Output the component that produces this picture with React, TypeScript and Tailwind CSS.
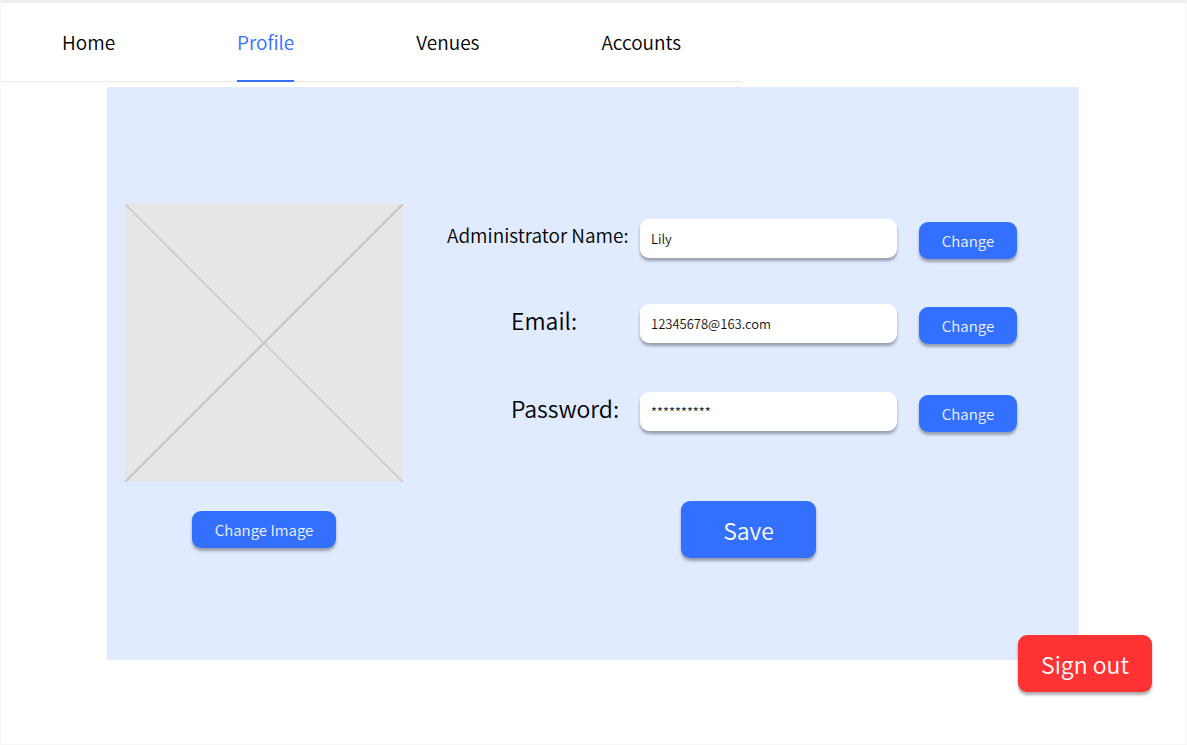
import { useState } from "react";

const tabs = ["Home", "Profile", "Venues", "Accounts"];

const fields = [
  { id: "name", label: "Administrator Name:", value: "Lily", labelStyle: "text-[19px]", rowStyle: "pb-[45px]" },
  { id: "email", label: "Email:", value: "12345678@163.com", labelStyle: "pl-[64px] text-[23px]", rowStyle: "pb-[48px]" },
  { id: "password", label: "Password:", value: "**********", labelStyle: "pl-[64px] text-[23px]", rowStyle: "pb-[69px]" },
];

const shadow = "shadow-[0_3px_3px_rgba(0,0,0,0.32)]";

function SmallButton({ children, className = "" }: { children: string; className?: string }) {
  return (
    <button
      type="button"
      className={`block h-[37px] shrink-0 rounded-[9px] bg-[#3370ff] pt-px text-[15px] leading-[36px] font-[350] text-[#f0f5ff] ${shadow} ${className}`}
    >
      {children}
    </button>
  );
}

function ImagePlaceholder() {
  return (
    <svg viewBox="0 0 278 278" className="block aspect-square w-full bg-[#e6e6e6]" role="img" aria-label="Profile image">
      <path d="M0 0L278 278" stroke="#bfbfbf" strokeWidth="1.2" fill="none" />
      <path d="M0 278L278 0" stroke="#c2c2c2" strokeWidth="1.9" fill="none" />
    </svg>
  );
}

export default function App() {
  const [active, setActive] = useState("Profile");
  const [values, setValues] = useState<Record<string, string>>(
    Object.fromEntries(fields.map((f) => [f.id, f.value])),
  );

  return (
    <div className="min-h-screen border border-t-3 border-[#f7f7f7] border-t-[#eeeeee] bg-white font-['Noto_Sans_CJK_SC',sans-serif] font-[350] text-black">
      <nav className="flex h-[79px] w-fit border-b border-[#e9e9eb]">
        {tabs.map((tab) => (
          <a
            key={tab}
            href={`#${tab.toLowerCase()}`}
            onClick={() => setActive(tab)}
            className={`mx-[61px] -mb-px border-b-2 pt-[24px] text-[19px] leading-[30px] ${
              tab === active ? "border-[#3370ff] text-[#3370ff]" : "border-transparent"
            }`}
          >
            {tab}
          </a>
        ))}
      </nav>

      <main className="relative mt-[5px] mr-[107px] ml-[106px] flex min-h-[573px] items-start bg-[#e0ebff] pt-[117px] pr-[62px] pl-[18px]">
        <section className="flex w-[278px] shrink-0 flex-col items-center gap-[29px]">
          <ImagePlaceholder />
          <SmallButton className="w-[144px]">Change Image</SmallButton>
        </section>

        <form className="ml-[44px] flex-1 pt-[15px]" onSubmit={(e) => e.preventDefault()}>
          {fields.map((f) => (
            <div key={f.id} className={`flex items-start ${f.rowStyle}`}>
              <label htmlFor={f.id} className={`w-[193px] shrink-0 leading-[32px] whitespace-nowrap ${f.labelStyle}`}>
                {f.label}
              </label>
              <input
                id={f.id}
                type="text"
                value={values[f.id]}
                onChange={(e) => setValues({ ...values, [f.id]: e.target.value })}
                className={`h-[39px] min-w-0 flex-1 rounded-[9px] bg-white px-[11px] text-[13px] text-[#111111] outline-none ${shadow}`}
              />
              <div className="pt-[3px] pl-[22px]">
                <SmallButton className="w-[98px]">Change</SmallButton>
              </div>
            </div>
          ))}
          <button
            type="submit"
            className={`ml-[234px] h-[57px] w-[135px] rounded-[9px] bg-[#3370ff] pt-px text-[23px] leading-[56px] font-[350] text-white ${shadow}`}
          >
            Save
          </button>
        </form>

        <button
          type="button"
          className={`absolute -right-[73px] -bottom-[32px] h-[57px] w-[134px] rounded-[9px] bg-[#ff3333] pt-px text-[23px] leading-[56px] font-[350] text-white ${shadow}`}
        >
          Sign out
        </button>
      </main>
    </div>
  );
}
